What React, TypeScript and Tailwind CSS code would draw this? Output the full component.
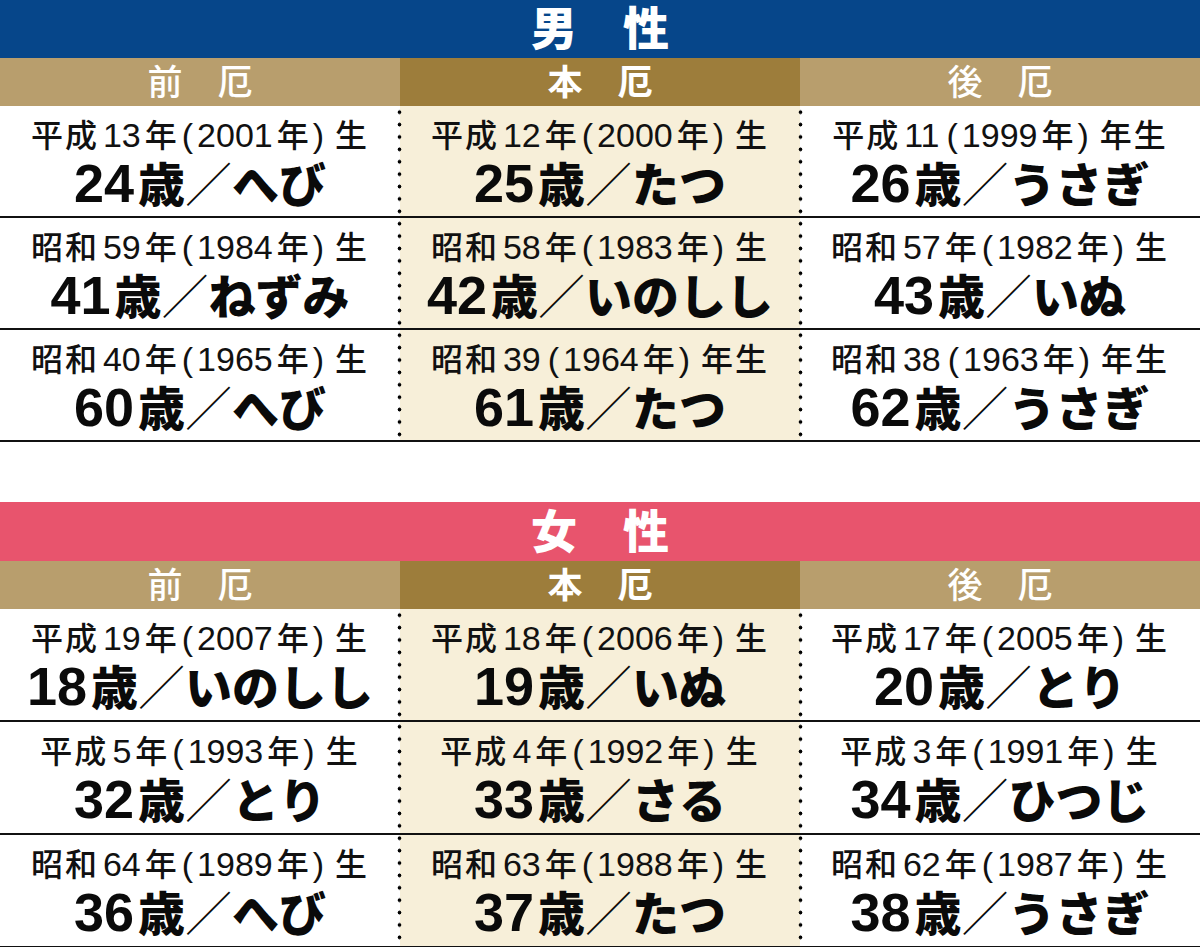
import React from 'react';

type Cell = { born: string; age: string; sign: string };
type Section = { title: string; headerBg: string; cols: Cell[][] };

const sections: Section[] = [
  {
    title: '男　性',
    headerBg: 'bg-[#06468a]',
    cols: [
      [
        { born: '平成13年（2001年）生', age: '24', sign: 'へび' },
        { born: '昭和59年（1984年）生', age: '41', sign: 'ねずみ' },
        { born: '昭和40年（1965年）生', age: '60', sign: 'へび' },
      ],
      [
        { born: '平成12年（2000年）生', age: '25', sign: 'たつ' },
        { born: '昭和58年（1983年）生', age: '42', sign: 'いのしし' },
        { born: '昭和39（1964年）年生', age: '61', sign: 'たつ' },
      ],
      [
        { born: '平成11（1999年）年生', age: '26', sign: 'うさぎ' },
        { born: '昭和57年（1982年）生', age: '43', sign: 'いぬ' },
        { born: '昭和38（1963年）年生', age: '62', sign: 'うさぎ' },
      ],
    ],
  },
  {
    title: '女　性',
    headerBg: 'bg-[#e8546d]',
    cols: [
      [
        { born: '平成19年（2007年）生', age: '18', sign: 'いのしし' },
        { born: '平成5年（1993年）生', age: '32', sign: 'とり' },
        { born: '昭和64年（1989年）生', age: '36', sign: 'へび' },
      ],
      [
        { born: '平成18年（2006年）生', age: '19', sign: 'いぬ' },
        { born: '平成4年（1992年）生', age: '33', sign: 'さる' },
        { born: '昭和63年（1988年）生', age: '37', sign: 'たつ' },
      ],
      [
        { born: '平成17年（2005年）生', age: '20', sign: 'とり' },
        { born: '平成3年（1991年）生', age: '34', sign: 'ひつじ' },
        { born: '昭和62年（1987年）生', age: '38', sign: 'うさぎ' },
      ],
    ],
  },
];

const labels = ['前　厄', '本　厄', '後　厄'];

// split "平成13年（2001年）生" so digits and brackets can be sized on their own
function Born({ text }: { text: string }) {
  const parts = text.split(/(\d+|（|）)/).filter(Boolean);
  return (
    <div className="text-[32px] leading-[38px] tracking-[2px] whitespace-nowrap text-[#111] font-medium">
      {parts.map((p, i) => {
        if (/^\d+$/.test(p))
          return (
            <span key={i} className="text-[34px] tracking-normal mx-[4px] font-normal">
              {p}
            </span>
          );
        if (p === '（')
          return (
            <span key={i} className="text-[34px] tracking-normal ml-[3px] font-normal">
              (
            </span>
          );
        if (p === '）')
          return (
            <span key={i} className="text-[34px] tracking-normal ml-[2px] mr-[11px] font-normal">
              )
            </span>
          );
        return <span key={i}>{p}</span>;
      })}
    </div>
  );
}

function Dots({ side }: { side: 'left' | 'right' }) {
  return (
    <div
      className={
        'absolute inset-y-0 w-[5px] z-10 bg-[radial-gradient(circle,#000_1.6px,transparent_2.2px)] bg-[length:5px_12.4px] bg-repeat-y ' +
        (side === 'left' ? 'left-[-3px]' : 'right-[-3px]')
      }
    />
  );
}

function Row({ cell, tall }: { cell: Cell; tall: boolean }) {
  return (
    <div
      className={
        'flex flex-col items-center border-b-2 border-[#111] pt-[10px] ' +
        (tall ? 'h-[113px]' : 'h-[112px]')
      }
    >
      <Born text={cell.born} />
      <div className="text-[47px] leading-[56px] font-black whitespace-nowrap text-[#0a0a0a]">
        <span className="font-['Liberation_Sans',sans-serif] font-bold text-[54px] mr-[4px]">{cell.age}</span>
        <span>歳</span>
        <span className="font-extralight">／</span>
        <span>{cell.sign}</span>
      </div>
    </div>
  );
}

function Table({ section, second }: { section: Section; second: boolean }) {
  return (
    <div>
      <div
        className={
          'flex items-center justify-center text-white text-[46px] font-black leading-none ' +
          section.headerBg +
          (second ? ' h-[59px]' : ' h-[58px]')
        }
      >
        {section.title}
      </div>
      <div className="grid grid-cols-3 h-[48px] text-white text-[35px] leading-none">
        {labels.map((l, i) => (
          <div
            key={l}
            className={
              'flex items-center justify-center ' +
              (i === 1 ? 'bg-[#9d7d3b] font-bold' : 'bg-[#b89e6d] font-medium')
            }
          >
            {l}
          </div>
        ))}
      </div>
      <div className="grid grid-cols-3">
        {section.cols.map((col, i) => (
          <div key={i} className={i === 1 ? 'relative bg-[#f7efd9]' : 'bg-white'}>
            {i === 1 && <Dots side="left" />}
            {i === 1 && <Dots side="right" />}
            {col.map((cell, j) => (
              <Row key={j} cell={cell} tall={second} />
            ))}
          </div>
        ))}
      </div>
    </div>
  );
}

export default function App() {
  return (
    <div className="w-[1200px] h-[947px] overflow-hidden bg-white font-['Liberation_Sans','Noto_Sans_CJK_JP',sans-serif]">
      <Table section={sections[0]} second={false} />
      <div className="h-[60px]" />
      <Table section={sections[1]} second={true} />
    </div>
  );
}
